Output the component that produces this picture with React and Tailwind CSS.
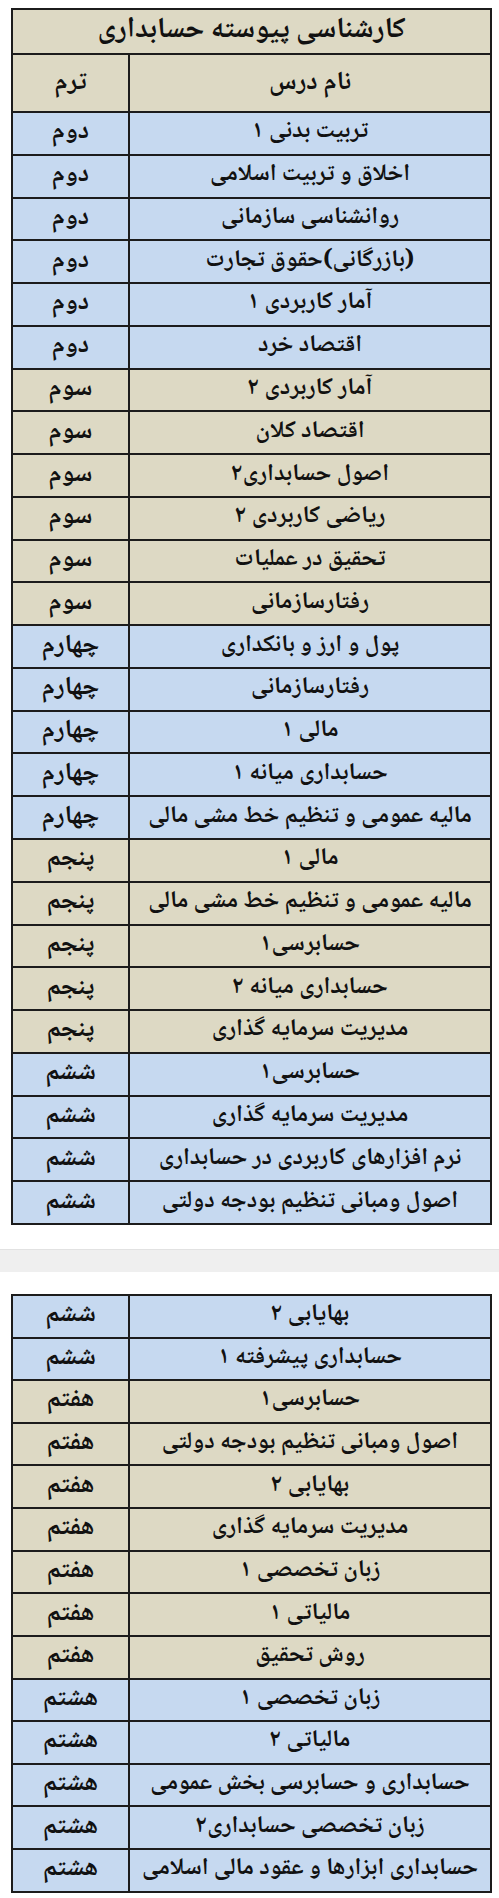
import React from "react";

const BEIGE = "bg-[#ddd9c4]";
const BLUE = "bg-[#c6d9f0]";

const table1 = [
  ["تربیت بدنی ۱", "دوم", "b"],
  ["اخلاق و تربیت اسلامی", "دوم", "b"],
  ["روانشناسی سازمانی", "دوم", "b"],
  ["(بازرگانی)حقوق تجارت", "دوم", "b"],
  ["آمار کاربردی ۱", "دوم", "b"],
  ["اقتصاد خرد", "دوم", "b"],
  ["آمار کاربردی ۲", "سوم", "t"],
  ["اقتصاد کلان", "سوم", "t"],
  ["اصول حسابداری۲", "سوم", "t"],
  ["ریاضی کاربردی ۲", "سوم", "t"],
  ["تحقیق در عملیات", "سوم", "t"],
  ["رفتارسازمانی", "سوم", "t"],
  ["پول و ارز و بانکداری", "چهارم", "b"],
  ["رفتارسازمانی", "چهارم", "b"],
  ["مالی ۱", "چهارم", "b"],
  ["حسابداری میانه ۱", "چهارم", "b"],
  ["مالیه عمومی و تنظیم خط مشی مالی", "چهارم", "b"],
  ["مالی ۱", "پنجم", "t"],
  ["مالیه عمومی و تنظیم خط مشی مالی", "پنجم", "t"],
  ["حسابرسی۱", "پنجم", "t"],
  ["حسابداری میانه ۲", "پنجم", "t"],
  ["مدیریت سرمایه گذاری", "پنجم", "t"],
  ["حسابرسی۱", "ششم", "b"],
  ["مدیریت سرمایه گذاری", "ششم", "b"],
  ["نرم افزارهای کاربردی در حسابداری", "ششم", "b"],
  ["اصول ومبانی تنظیم بودجه دولتی", "ششم", "b"],
];

const table2 = [
  ["بهایابی ۲", "ششم", "b"],
  ["حسابداری پیشرفته ۱", "ششم", "b"],
  ["حسابرسی۱", "هفتم", "t"],
  ["اصول ومبانی تنظیم بودجه دولتی", "هفتم", "t"],
  ["بهایابی ۲", "هفتم", "t"],
  ["مدیریت سرمایه گذاری", "هفتم", "t"],
  ["زبان تخصصی ۱", "هفتم", "t"],
  ["مالیاتی ۱", "هفتم", "t"],
  ["روش تحقیق", "هفتم", "t"],
  ["زبان تخصصی ۱", "هشتم", "b"],
  ["مالیاتی ۲", "هشتم", "b"],
  ["حسابداری و حسابرسی بخش عمومی", "هشتم", "b"],
  ["زبان تخصصی حسابداری۲", "هشتم", "b"],
  ["حسابداری ابزارها و عقود مالی اسلامی", "هشتم", "b"],
];

function Row({ name, term, color, h, first }) {
  const bg = color === "b" ? BLUE : BEIGE;
  return (
    <div className={`flex ${h} ${bg} ${first ? "" : "border-t-2 border-[#1c1c1c]"}`}>
      <div className="flex-1 flex items-center justify-center border-l-2 border-[#1c1c1c] text-[24px] font-bold text-[#111] leading-none pb-[2px] whitespace-nowrap">
        {name}
      </div>
      <div className="w-[115px] flex items-center justify-center text-[26px] font-bold text-[#111] leading-none pb-[2px]">
        {term}
      </div>
    </div>
  );
}

export default function App() {
  return (
    <div
      dir="rtl"
      className="w-[499px] h-[1898px] bg-white pt-[8px]"
      style={{ fontFamily: '"Noto Naskh Arabic", "Noto Sans Arabic", "DejaVu Sans", sans-serif' }}
    >
      <div className="mr-[7px] w-[481px] border-2 border-[#1c1c1c]">
        <div className={`h-[43px] ${BEIGE} flex items-center justify-center text-[29px] font-bold text-[#111] leading-none pb-[2px]`}>
          کارشناسی پیوسته حسابداری
        </div>
        <div className={`flex h-[58px] ${BEIGE} border-t-2 border-[#1c1c1c]`}>
          <div className="flex-1 flex items-center justify-center border-l-2 border-[#1c1c1c] text-[26px] font-bold text-[#111] leading-none">
            نام درس
          </div>
          <div className="w-[115px] flex items-center justify-center text-[26px] font-bold text-[#111] leading-none">
            ترم
          </div>
        </div>
        {table1.map(([n, t, c], i) => (
          <Row key={i} name={n} term={t} color={c} h="h-[42.77px]" />
        ))}
      </div>

      <div className="mt-[24px] h-[23px] bg-[#efefef] border-t border-[#e2e2e2]" />

      <div className="mt-[22px] mr-[7px] w-[481px] border-2 border-[#1c1c1c]">
        {table2.map(([n, t, c], i) => (
          <Row key={i} name={n} term={t} color={c} h={i === 0 ? "h-[40.64px]" : "h-[42.64px]"} first={i === 0} />
        ))}
      </div>
    </div>
  );
}
